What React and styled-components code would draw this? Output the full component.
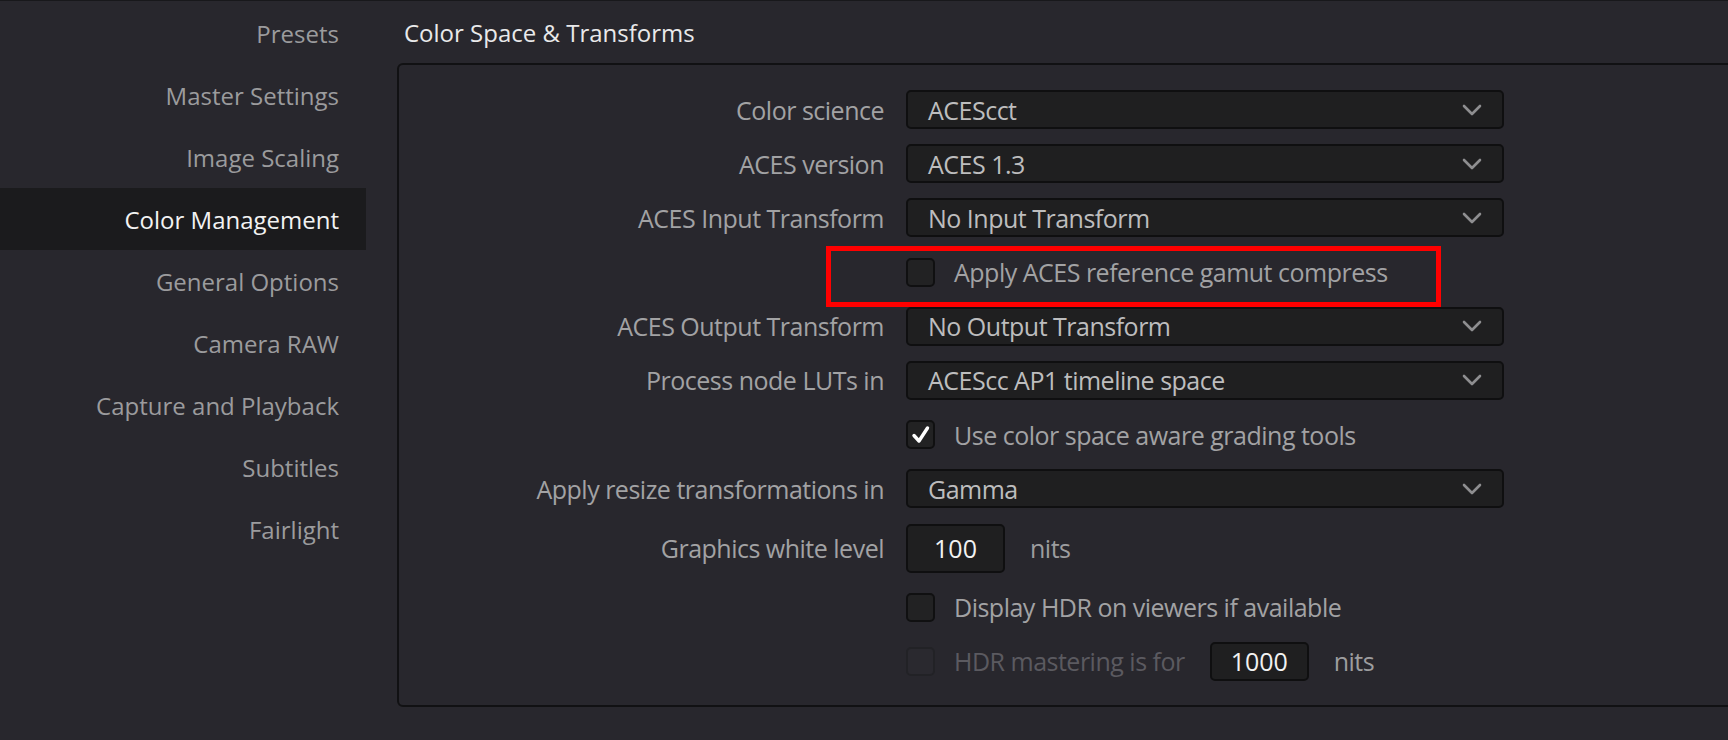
import React from 'react';
import styled, { createGlobalStyle } from 'styled-components';

const GlobalStyle = createGlobalStyle`
  html, body {
    margin: 0;
    padding: 0;
    background: #28272d;
  }
  body {
    font-family: 'Open Sans', 'Noto Sans', sans-serif;
    overflow: hidden;
  }
`;

const Page = styled.div`
  display: flex;
  width: 1728px;
  height: 740px;
  background: #28272d;
  border-top: 1px solid #18181b;
  box-sizing: border-box;
  overflow: hidden;
`;

const Sidebar = styled.nav`
  width: 366px;
  flex-shrink: 0;
  display: flex;
  flex-direction: column;
  padding-top: 1px;
`;

const NavItem = styled.div`
  height: 62px;
  display: flex;
  align-items: center;
  justify-content: flex-end;
  padding-right: 27px;
  font-size: 24px;
  color: ${(p) => (p.$active ? '#f2f2f2' : '#9b9b9d')};
  background: ${(p) => (p.$active ? '#1b1b1d' : 'transparent')};
`;

const Main = styled.main`
  flex: 1;
  display: flex;
  flex-direction: column;
  padding-left: 31px;
  margin-right: -40px;
`;

const Title = styled.h2`
  margin: 0;
  height: 62px;
  display: flex;
  align-items: center;
  padding-left: 7px;
  font-size: 24px;
  font-weight: 400;
  color: #e9e9ea;
`;

const Panel = styled.section`
  border: 2px solid #111113;
  border-radius: 6px;
  padding: 25px 0 24px;
  display: grid;
  grid-template-columns: 485px 1fr;
  column-gap: 22px;
  row-gap: 15.2px;
  align-items: center;
`;

const textFace = `
  font-size: 25px;
  letter-spacing: -0.5px;
`;

const Label = styled.div`
  justify-self: end;
  ${textFace}
  color: #a2a2a4;
  white-space: nowrap;
`;

const Control = styled.div`
  position: relative;
  display: flex;
  align-items: center;
  gap: 25px;
  min-height: 39px;
`;

const Select = styled.div`
  width: 598px;
  height: 39px;
  box-sizing: border-box;
  background: #1f1f20;
  border: 2px solid #0f0f10;
  border-radius: 5px;
  display: flex;
  align-items: center;
  justify-content: space-between;
  padding: 0 20px 0 20px;
  ${textFace}
  color: #bdbdbe;
`;

const Chevron = () => (
  <svg width="20" height="12" viewBox="0 0 20 12" fill="none">
    <path d="M2 2 L10 10 L18 2" stroke="#8e8e90" strokeWidth="2.6" strokeLinecap="round" strokeLinejoin="round" />
  </svg>
);

const Box = styled.div`
  width: 29px;
  height: 29px;
  box-sizing: border-box;
  border-radius: 5px;
  background: ${(p) => (p.$disabled ? '#2a292f' : '#222223')};
  border: 2px solid ${(p) => (p.$disabled ? '#222226' : '#101011')};
  display: flex;
  align-items: center;
  justify-content: center;
  flex-shrink: 0;
`;

const CheckText = styled.span`
  ${textFace}
  color: ${(p) => (p.$disabled ? '#5b5a60' : '#a2a2a4')};
  margin-left: -6px;
  white-space: nowrap;
`;

const NumberInput = styled.div`
  width: 99px;
  height: ${(p) => p.$h}px;
  box-sizing: border-box;
  background: #1f1f20;
  border: 2px solid #0f0f10;
  border-radius: 5px;
  display: flex;
  align-items: center;
  justify-content: center;
  font-size: 25px;
  color: #f2f2f2;
`;

const Unit = styled.span`
  ${textFace}
  color: #9d9d9f;
`;

const Highlight = styled.div`
  position: absolute;
  left: -80px;
  top: -7px;
  width: 615px;
  height: 61px;
  box-sizing: border-box;
  border: 5px solid #ff0000;
  pointer-events: none;
`;

const Tick = () => (
  <svg width="20" height="20" viewBox="0 0 20 20" fill="none">
    <path d="M3 10.5 L8 16 L16.5 3" stroke="#ffffff" strokeWidth="3.4" strokeLinecap="round" strokeLinejoin="round" />
  </svg>
);

const navItems = [
  'Presets',
  'Master Settings',
  'Image Scaling',
  'Color Management',
  'General Options',
  'Camera RAW',
  'Capture and Playback',
  'Subtitles',
  'Fairlight',
];

function SelectRow({ label, value }) {
  return (
    <>
      <Label>{label}</Label>
      <Control>
        <Select>
          <span>{value}</span>
          <Chevron />
        </Select>
      </Control>
    </>
  );
}

function CheckRow({ text, checked, disabled, children, highlight }) {
  return (
    <>
      <span />
      <Control>
        {highlight && <Highlight />}
        <Box $disabled={disabled}>{checked && <Tick />}</Box>
        <CheckText $disabled={disabled}>{text}</CheckText>
        {children}
      </Control>
    </>
  );
}

export default function App() {
  return (
    <Page>
      <GlobalStyle />
      <Sidebar>
        {navItems.map((item) => (
          <NavItem key={item} $active={item === 'Color Management'}>
            {item}
          </NavItem>
        ))}
      </Sidebar>
      <Main>
        <Title>Color Space &amp; Transforms</Title>
        <Panel>
          <SelectRow label="Color science" value="ACEScct" />
          <SelectRow label="ACES version" value="ACES 1.3" />
          <SelectRow label="ACES Input Transform" value="No Input Transform" />
          <CheckRow text="Apply ACES reference gamut compress" highlight />
          <SelectRow label="ACES Output Transform" value="No Output Transform" />
          <SelectRow label="Process node LUTs in" value="ACEScc AP1 timeline space" />
          <CheckRow text="Use color space aware grading tools" checked />
          <SelectRow label="Apply resize transformations in" value="Gamma" />
          <Label>Graphics white level</Label>
          <Control>
            <NumberInput $h={49}>100</NumberInput>
            <Unit>nits</Unit>
          </Control>
          <CheckRow text="Display HDR on viewers if available" />
          <CheckRow text="HDR mastering is for" disabled>
            <NumberInput $h={39}>1000</NumberInput>
            <Unit>nits</Unit>
          </CheckRow>
        </Panel>
      </Main>
    </Page>
  );
}
